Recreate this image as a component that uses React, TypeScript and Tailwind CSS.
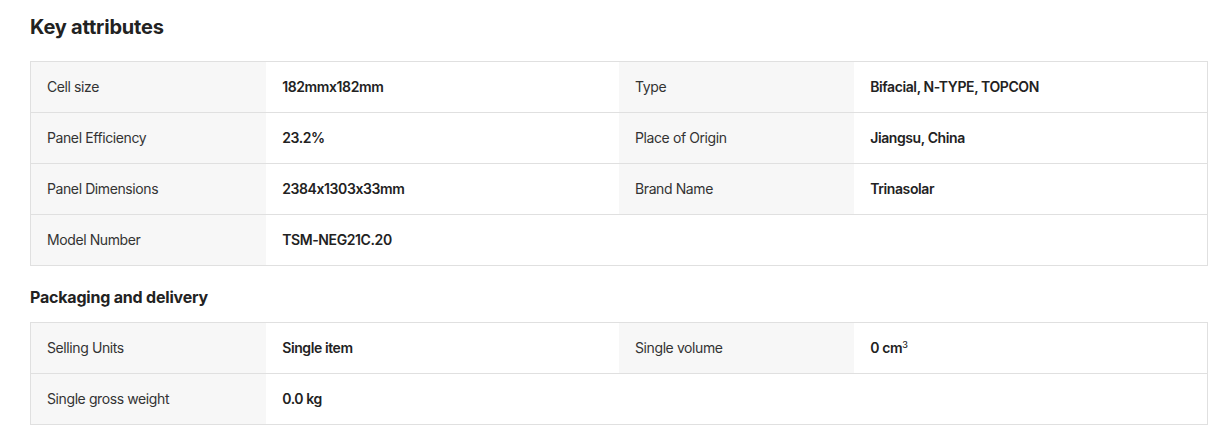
const keyAttributes: [string, React.ReactNode][] = [
  ["Cell size", "182mmx182mm"],
  ["Type", "Bifacial, N-TYPE, TOPCON"],
  ["Panel Efficiency", "23.2%"],
  ["Place of Origin", "Jiangsu, China"],
  ["Panel Dimensions", "2384x1303x33mm"],
  ["Brand Name", "Trinasolar"],
  ["Model Number", "TSM-NEG21C.20"],
];

const packaging: [string, React.ReactNode][] = [
  ["Selling Units", "Single item"],
  [
    "Single volume",
    <>
      0 cm<sup className="relative -top-[3px] text-[9px] font-medium">3</sup>
    </>,
  ],
  ["Single gross weight", "0.0 kg"],
];

function AttrTable({ items }: { items: [string, React.ReactNode][] }) {
  const rows: [string, React.ReactNode][][] = [];
  for (let i = 0; i < items.length; i += 2) rows.push(items.slice(i, i + 2));

  return (
    <div className="w-[1178px] border border-[#e0e0e0]">
      {rows.map((row, i) => {
        const last = i === rows.length - 1;
        return (
          <div
            key={i}
            className={last ? "flex h-[50px]" : "flex h-[51px] border-b border-[#e0e0e0]"}
          >
            {row.map(([label, value]) => (
              <div key={label} className="flex w-1/2">
                <div className="flex w-2/5 items-center bg-[#f7f7f7] px-4 text-sm tracking-[-0.4px] text-[#333]">
                  {label}
                </div>
                <div className="flex w-3/5 items-center px-4 text-sm font-semibold tracking-[-0.4px] text-[#222]">
                  {value}
                </div>
              </div>
            ))}
          </div>
        );
      })}
    </div>
  );
}

export default function App() {
  return (
    <div className="min-h-[432px] bg-white px-[30px] pt-[13px] font-['Inter',sans-serif] text-[#222] [font-feature-settings:'calt'_0]">
      <h2 className="text-xl font-bold leading-7 tracking-[-0.2px] text-[#222]">Key attributes</h2>
      <div className="mt-5">
        <AttrTable items={keyAttributes} />
      </div>
      <h3 className="mt-[19px] text-base font-bold leading-6 tracking-[-0.2px]">
        Packaging and delivery
      </h3>
      <div className="mt-[13px]">
        <AttrTable items={packaging} />
      </div>
    </div>
  );
}
